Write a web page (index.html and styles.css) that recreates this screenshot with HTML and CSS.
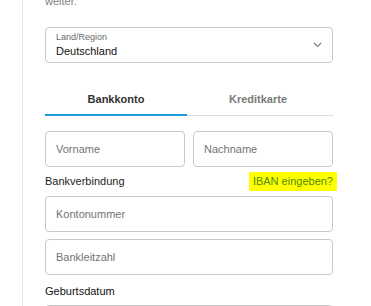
FILE: index.html
```html
<!DOCTYPE html>
<html lang="de">
<head>
  <meta charset="UTF-8">
  <title>Zahlungsmethode</title>
  <link rel="stylesheet" href="styles.css">
</head>
<body>
  <div class="panel">
    <p class="intro">weiter.</p>

    <!-- Land / Region -->
    <label class="select-box">
      <span class="select-label">Land/Region</span>
      <span class="select-value">Deutschland</span>
      <svg class="chevron" width="9" height="6" viewBox="0 0 9 6">
        <path d="M1 1 L4.5 4.5 L8 1" fill="none" stroke="#7a7a7a" stroke-width="1.1"/>
      </svg>
    </label>

    <!-- Tabs -->
    <div class="tabs">
      <div class="tab active">Bankkonto</div>
      <div class="tab">Kreditkarte</div>
    </div>

    <div class="row two">
      <input type="text" class="field" placeholder="Vorname">
      <input type="text" class="field" placeholder="Nachname">
    </div>

    <div class="label-row">
      <span class="label">Bankverbindung</span>
      <a class="iban-link" href="#">IBAN eingeben?</a>
    </div>

    <input type="text" class="field full" placeholder="Kontonummer">
    <input type="text" class="field full spaced" placeholder="Bankleitzahl">

    <div class="label dob-label">Geburtsdatum</div>
    <div class="dob">
      <div class="dob-cell"></div>
      <div class="dob-cell"></div>
      <div class="dob-cell"></div>
    </div>
  </div>
</body>
</html>
```

FILE: styles.css
```css
body {
  margin: 0;
  background: #fff;
  font-family: "Liberation Sans", Arial, sans-serif;
  font-size: 11px;
  color: #222;
  overflow: hidden;
}
.panel {
  margin-left: 22px;
  border-left: 1px solid #e4e4e4;
  padding-left: 22px;
  width: 288px;
  min-height: 320px;
}
.intro {
  margin: -5px 0 0;
  line-height: 13px;
  color: #7d7d7d;
}

/* Land / Region dropdown */
.select-box {
  position: relative;
  display: block;
  margin-top: 19px;
  height: 36px;
  box-sizing: border-box;
  border: 1px solid #c9c9c9;
  border-radius: 4px;
  padding: 4px 10px 4px;
}
.select-label {
  display: block;
  font-size: 9px;
  line-height: 11px;
  color: #6a6a6a;
}
.select-value {
  display: block;
  margin-top: 2px;
  line-height: 13px;
  color: #111;
}
.chevron {
  position: absolute;
  right: 10px;
  top: 14px;
}

/* Tabs */
.tabs {
  display: flex;
  margin-top: 22px;
  border-bottom: 1px solid #dcdcdc;
}
.tab {
  width: 142px;
  padding: 8px 0;
  line-height: 13px;
  margin-bottom: -1px;
  border-bottom: 2px solid transparent;
  text-align: center;
  font-weight: bold;
  color: #7a7a7a;
}
.tab.active {
  color: #333;
  border-bottom-color: #1f9bd7;
}

/* Fields */
.row {
  display: flex;
  gap: 8px;
  margin-top: 15px;
}
.field {
  display: block;
  height: 36px;
  box-sizing: border-box;
  margin: 0;
  border: 1px solid #c9c9c9;
  border-radius: 4px;
  padding: 0 10px;
  font-family: inherit;
  font-size: 11px;
  color: #111;
  outline: none;
}
.row .field {
  width: 140px;
}
.field.full {
  width: 288px;
}
.field.spaced {
  margin-top: 7px;
}
.field::placeholder {
  color: #737373;
}

.label-row {
  display: flex;
  justify-content: space-between;
  align-items: center;
  margin: 5px 0 5px;
  height: 19px;
}
.label {
  color: #1d1d26;
  line-height: 13px;
}
.iban-link {
  margin-right: -4px;
  padding: 3px 4px;
  line-height: 13px;
  background: #ffff00;
  color: #4f8c00;
  text-decoration: none;
}

.dob-label {
  margin-top: 10px;
  color: #111;
}
.dob {
  display: flex;
  margin-top: 7px;
  height: 36px;
  box-sizing: border-box;
  border: 1px solid #c9c9c9;
  border-radius: 4px;
}
.dob-cell {
  flex: 0 0 86px;
}
.dob-cell + .dob-cell {
  border-left: 1px solid #c9c9c9;
}
.dob-cell:last-child {
  flex: 1;
}
```
